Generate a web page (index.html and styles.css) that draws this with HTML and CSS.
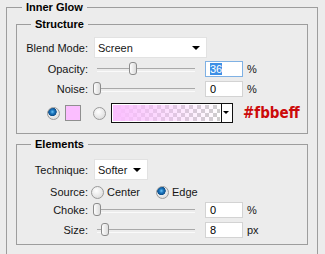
FILE: index.html
```html
<!DOCTYPE html>
<html lang="en">
<head>
    <meta charset="UTF-8">
    <title>Inner Glow</title>
    <link rel="stylesheet" href="styles.css">
</head>
<body>
    <fieldset class="panel">
        <legend>Inner Glow</legend>

        <!-- Structure -->
        <fieldset class="group structure">
            <legend>Structure</legend>

            <div class="row row-select">
                <span class="label">Blend Mode:</span>
                <div class="select select-wide">Screen<span class="arrow"></span></div>
            </div>

            <div class="row row-slider">
                <span class="label">Opacity:</span>
                <div class="slider"><span class="thumb" style="left: 36px"></span></div>
                <div class="field focus"><span class="selected">36</span></div>
                <span class="unit">%</span>
            </div>

            <div class="row row-slider">
                <span class="label">Noise:</span>
                <div class="slider"><span class="thumb" style="left: 0px"></span></div>
                <div class="field">0</div>
                <span class="unit">%</span>
            </div>

            <div class="row row-color">
                <span class="radio checked"></span>
                <span class="swatch"></span>
                <span class="radio"></span>
                <div class="gradient">
                    <span class="gradient-fill"></span>
                    <span class="gradient-drop"><span class="arrow small"></span></span>
                </div>
                <span class="hex">#fbbeff</span>
            </div>
        </fieldset>

        <!-- Elements -->
        <fieldset class="group elements">
            <legend>Elements</legend>

            <div class="row row-select">
                <span class="label">Technique:</span>
                <div class="select select-short">Softer<span class="arrow"></span></div>
            </div>

            <div class="row row-source">
                <span class="label">Source:</span>
                <span class="radio"></span>
                <span class="option">Center</span>
                <span class="radio checked"></span>
                <span class="option">Edge</span>
            </div>

            <div class="row row-slider">
                <span class="label">Choke:</span>
                <div class="slider"><span class="thumb" style="left: 0px"></span></div>
                <div class="field">0</div>
                <span class="unit">%</span>
            </div>

            <div class="row row-slider">
                <span class="label">Size:</span>
                <div class="slider"><span class="thumb" style="left: 8px"></span></div>
                <div class="field">8</div>
                <span class="unit">px</span>
            </div>
        </fieldset>
    </fieldset>
</body>
</html>
```
FILE: styles.css
```css
* {
    box-sizing: border-box;
}

body {
    margin: 0;
    height: 254px;
    background: #ececec;
    font-family: "Liberation Sans", Arial, sans-serif;
    font-size: 11px;
    color: #151515;
    overflow: hidden;
}

fieldset {
    margin: 0;
    border: 1px solid #9d9d9d;
}

legend {
    font-weight: bold;
    font-size: 11px;
    line-height: 14px;
    padding: 0 4px;
    color: #000;
}

.panel {
    margin-left: 6px;
    width: 312px;
    height: 260px;
    padding: 3px 9px 0;
}

.panel > legend {
    margin-left: 6px;
}

.group {
    width: 292px;
    padding: 0;
}

.group > legend {
    margin-left: 14px;
}

.structure {
    padding-bottom: 10px;
}

.elements {
    margin-top: 3px;
    padding-bottom: 5px;
}

/* Rows */
.row {
    display: flex;
    align-items: center;
}

.label {
    width: 71px;
    margin-right: 6px;
    text-align: right;
}

.row-select {
    height: 21px;
    margin-top: 6px;
}

.elements .row-select {
    margin-top: 8px;
}

.row-slider {
    height: 18px;
    margin-top: 2px;
}

.row-source {
    height: 14px;
    margin-top: 5px;
}

.row-color {
    height: 20px;
    margin-top: 5px;
    padding-left: 30px;
}

/* Dropdowns */
.select {
    position: relative;
    height: 21px;
    line-height: 21px;
    padding-left: 3px;
    background: #fff;
    border: 1px solid #e2e2e2;
}

.select-wide {
    width: 113px;
}

.select-short {
    width: 54px;
}

.arrow {
    position: absolute;
    right: 6px;
    top: 8px;
    border-left: 4px solid transparent;
    border-right: 4px solid transparent;
    border-top: 4px solid #000;
}

.arrow.small {
    right: 3px;
    top: 7px;
    border-left-width: 3px;
    border-right-width: 3px;
    border-top-width: 3px;
}

/* Sliders */
.slider {
    position: relative;
    width: 104px;
    height: 14px;
    margin-left: -1px;
    margin-right: 8px;
}

.slider::before {
    content: "";
    position: absolute;
    left: 4px;
    right: 2px;
    top: 6px;
    height: 2px;
    border-top: 1px solid #a9a9a9;
    border-bottom: 1px solid #fafafa;
}

.thumb {
    position: absolute;
    top: 0;
    width: 8px;
    height: 13px;
    border: 1px solid #8c8c8c;
    border-radius: 3px;
    background: linear-gradient(to right, #fdfdfd, #dcdcdc);
}

/* Number fields */
.field {
    width: 38px;
    height: 16px;
    line-height: 14px;
    padding-left: 4px;
    background: #fff;
    border: 1px solid #d3d3d3;
    color: #000;
}

.field.focus {
    border-color: #7fb1e4;
}

.selected {
    display: inline-block;
    background: #3d8fe6;
    color: #fff;
    line-height: 12px;
}

.unit {
    margin-left: 4px;
}

/* Radios */
.radio {
    width: 13px;
    height: 13px;
    border-radius: 50%;
    border: 1px solid #9a9a9a;
    background: radial-gradient(circle at 40% 35%, #ffffff, #d4d4d4);
    flex: none;
}

.radio.checked {
    background: radial-gradient(circle at 40% 35%, #6cc3f5 0, #1d78c0 2px, #0b4d8a 4px, transparent 4.5px),
                radial-gradient(circle at 40% 35%, #ffffff, #d4d4d4);
}

.option {
    margin-left: 3px;
    margin-right: 16px;
}

.row-source .label {
    margin-right: 3px;
}

/* Colour row */
.swatch {
    width: 16px;
    height: 16px;
    margin-left: 5px;
    border: 1px solid #8f8f8f;
    background: #fbbeff;
}

.row-color .radio:nth-child(3) {
    margin-left: 12px;
}

.gradient {
    display: flex;
    width: 122px;
    height: 20px;
    margin-left: 5px;
    border: 1px solid #111;
    background: #fff;
}

.gradient-fill {
    flex: 1;
    border: 1px solid #fff;
    background: linear-gradient(to right, #fbbeff, rgba(251, 190, 255, 0)),
                repeating-conic-gradient(#cdcdcd 0 25%, #ffffff 0 50%) 0 0 / 8px 8px;
}

.gradient-drop {
    position: relative;
    width: 11px;
    border-left: 1px solid #111;
    background: #fff;
}

.hex {
    margin-left: 10px;
    font-family: "DejaVu Sans Condensed", "Liberation Sans", sans-serif;
    font-size: 15px;
    font-weight: bold;
    color: #cc0a0a;
}
```
